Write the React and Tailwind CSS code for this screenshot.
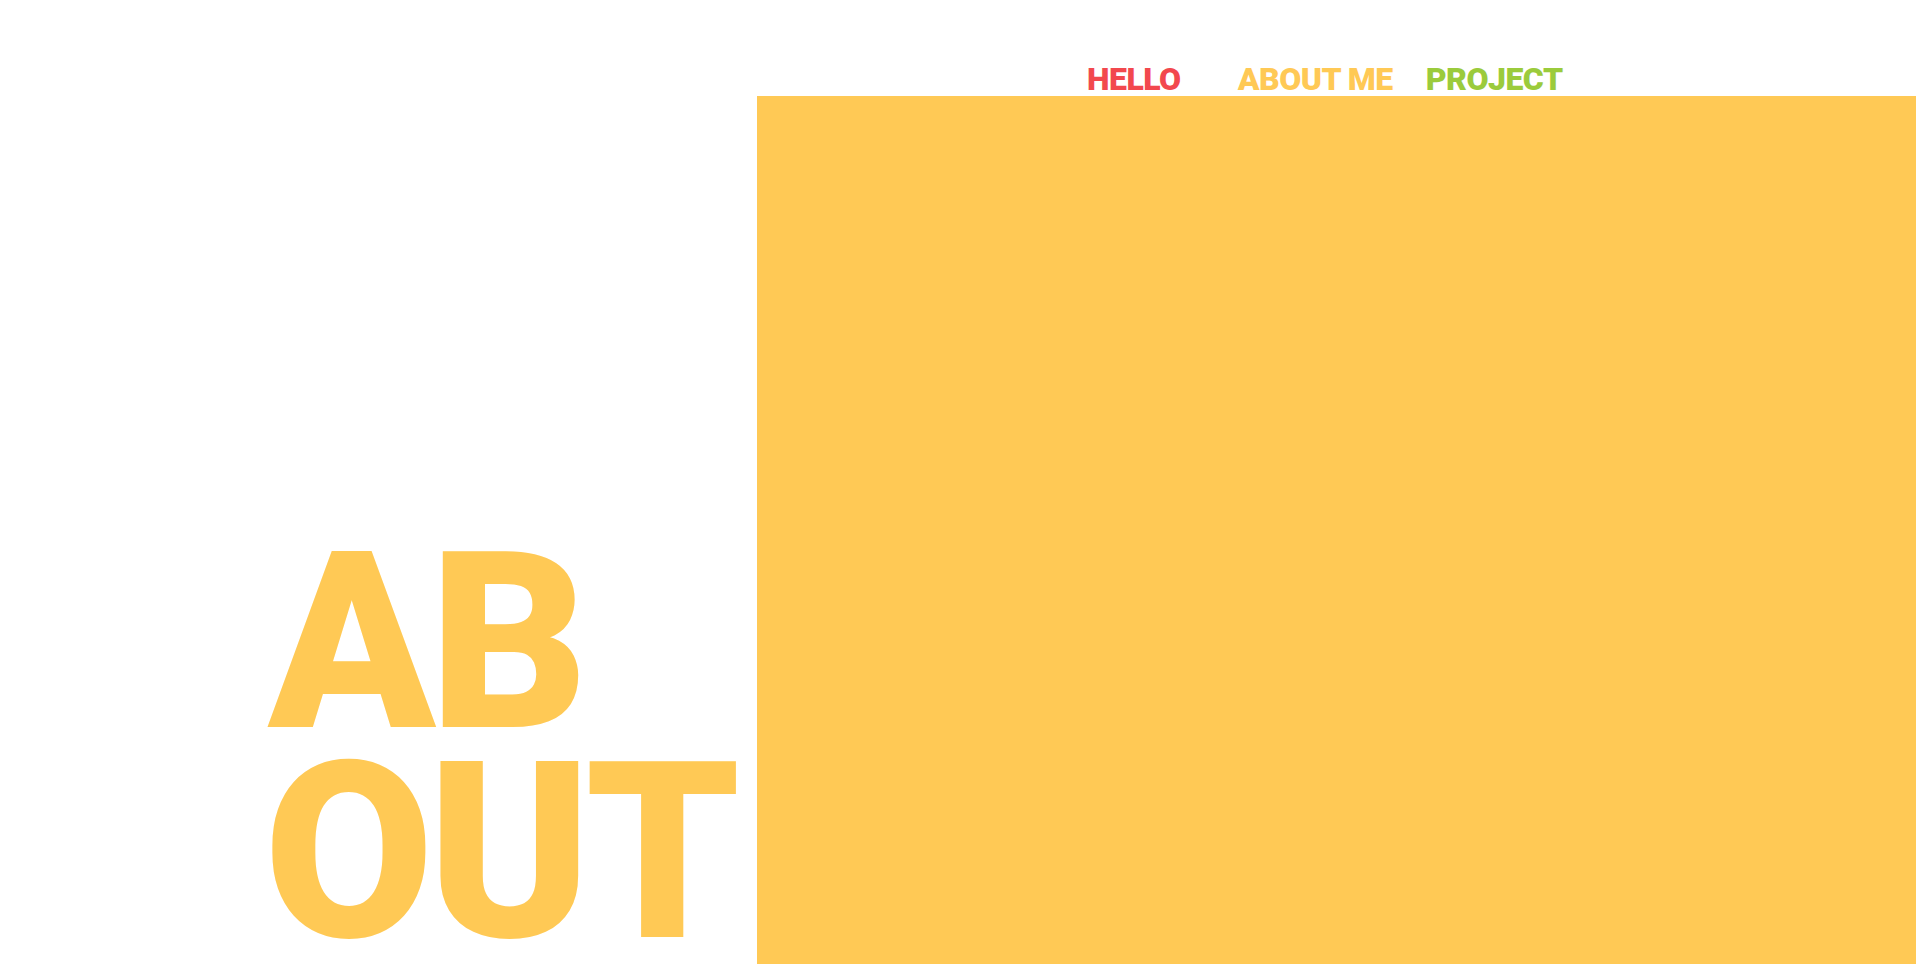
export default function App() {
  return (
    <div className="flex h-[964px] w-[1920px] overflow-hidden bg-white font-['Roboto',sans-serif]">
      <div className="w-[757px] shrink-0 pl-[268px] pt-[555px]">
        <h1 className="flex flex-col gap-[34px] text-[246px] leading-[176px] font-black tracking-[-6px] text-[#FFC955]">
          <span className="block">AB</span>
          <span className="-ml-[4px] block">OUT</span>
        </h1>
      </div>

      <div className="flex flex-1 flex-col pr-[4px]">
        <nav className="flex h-[96px] shrink-0 pt-[63px] pl-[330px] text-[32px] leading-[32px] font-black tracking-[-0.5px]">
          <a className="text-[#F2484E]">HELLO</a>
          <a className="ml-[57px] text-[#FFC955]">ABOUT ME</a>
          <a className="ml-[33px] text-[#9BCB3C]">PROJECT</a>
        </nav>
        <section className="flex-1 bg-[#FFC955]" />
      </div>
    </div>
  );
}
